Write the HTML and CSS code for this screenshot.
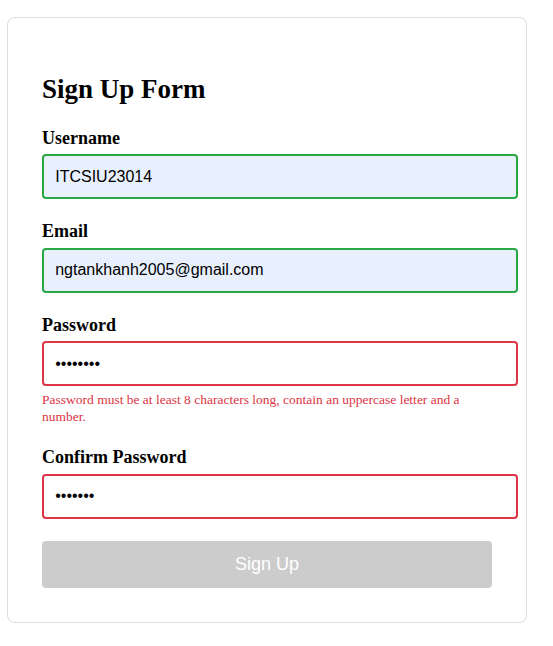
FILE: index.html
```html
<!DOCTYPE html>
<html lang="en">
<head>
<meta charset="utf-8">
<title>Sign Up Form</title>
<link rel="stylesheet" href="styles.css">
</head>
<body>
  <div class="card">
    <h2 class="title">Sign Up Form</h2>
    <form class="form">
      <div class="group">
        <label class="label" for="username">Username</label>
        <input class="field valid autofill" id="username" type="text" value="ITCSIU23014">
      </div>
      <div class="group">
        <label class="label" for="email">Email</label>
        <input class="field valid autofill" id="email" type="email" value="ngtankhanh2005@gmail.com">
      </div>
      <div class="group">
        <label class="label" for="password">Password</label>
        <input class="field invalid" id="password" type="password" value="abcdefgh">
        <div class="error">Password must be at least 8 characters long, contain an uppercase letter and a number.</div>
      </div>
      <div class="group">
        <label class="label" for="confirm">Confirm Password</label>
        <input class="field invalid" id="confirm" type="password" value="abcdefg">
      </div>
      <button class="submit" type="button" disabled>Sign Up</button>
    </form>
  </div>
</body>
</html>
```
FILE: styles.css
```css
html, body {
  margin: 0;
  padding: 0;
  background: #ffffff;
}

body {
  font-family: "Liberation Serif", "Times New Roman", serif;
  color: #000;
}

.card {
  box-sizing: border-box;
  width: 520px;
  margin: 17px 0 0 7px;
  padding: 34px;
  border: 1px solid #dddddd;
  border-radius: 8px;
  background: #fff;
}

.title {
  margin: 22.4px 0;
  font-size: 27px;
  line-height: 31px;
  font-weight: bold;
}

.form {
  display: flex;
  flex-direction: column;
}

.group {
  display: flex;
  flex-direction: column;
  align-items: flex-start;
  margin-bottom: 22px;
}

.label {
  display: block;
  font-size: 18px;
  font-weight: bold;
  line-height: 20.7px;
  margin-bottom: 6px;
}

.field {
  box-sizing: content-box;
  width: 450px;
  padding: 11.2px;
  margin: 0;
  border: 2px solid #cccccc;
  border-radius: 4px;
  font-family: "Liberation Sans", Arial, sans-serif;
  font-size: 16px;
  line-height: 18.4px;
  color: #000;
  background: #fff;
  outline: none;
}

.field.valid {
  border-color: #28a745;
}

.field.invalid {
  border-color: #dc3545;
}

.field.autofill {
  background-color: #e8f0fe;
}

.error {
  width: 450px;
  margin-top: 6px;
  font-size: 13.5px;
  line-height: 16.5px;
  color: #dc3545;
}

.submit {
  box-sizing: border-box;
  width: 450px;
  height: 47px;
  padding: 0;
  border: none;
  border-radius: 4px;
  background: #cccccc;
  color: #ffffff;
  font-family: "Liberation Sans", Arial, sans-serif;
  font-size: 18px;
}
```
